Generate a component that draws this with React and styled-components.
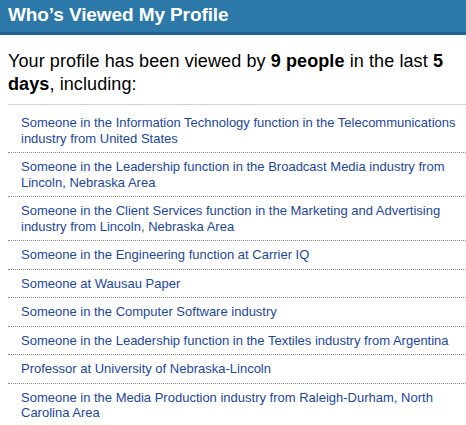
import React from "react";
import styled, { createGlobalStyle } from "styled-components";

const Global = createGlobalStyle`
  html, body { margin: 0; padding: 0; background: #fff; }
  body { font-family: "Liberation Sans", Arial, Helvetica, sans-serif; }
`;

const Page = styled.div`
  width: 466px;
  height: 425px;
  overflow: hidden;
  background: #fff;
`;

const Header = styled.div`
  height: 32px;
  background: #2b78a9;
  border-bottom: 3px solid #22628f;
  display: flex;
  align-items: center;
  padding: 0 8px;
`;

const Title = styled.h2`
  margin: 0;
  margin-top: -3px;
  color: #fff;
  font-size: 19px;
  font-weight: bold;
  letter-spacing: -0.1px;
`;

const Intro = styled.p`
  margin: 0;
  padding: 15px 4px 0 8px;
  font-size: 18px;
  line-height: 23px;
  letter-spacing: 0.1px;
  color: #000;
  b { font-weight: bold; }
`;

const List = styled.ul`
  list-style: none;
  margin: 8px 0 0 8px;
  padding: 4px 0 0 0;
  border-top: 1px solid #d2d2d2;
`;

const Item = styled.li`
  padding: 6px 6px 6px 13px;
  font-size: 13px;
  line-height: 15.5px;
  border-bottom: 1px dotted #8c8c8c;
  &:last-child { border-bottom: none; }
`;

const Link = styled.a`
  color: #1c47a0;
  text-decoration: none;
`;

const viewers = [
  "Someone in the Information Technology function in the Telecommunications industry from United States",
  "Someone in the Leadership function in the Broadcast Media industry from Lincoln, Nebraska Area",
  "Someone in the Client Services function in the Marketing and Advertising industry from Lincoln, Nebraska Area",
  "Someone in the Engineering function at Carrier IQ",
  "Someone at Wausau Paper",
  "Someone in the Computer Software industry",
  "Someone in the Leadership function in the Textiles industry from Argentina",
  "Professor at University of Nebraska-Lincoln",
  "Someone in the Media Production industry from Raleigh-Durham, North Carolina Area",
];

export default function App() {
  return (
    <Page>
      <Global />
      <Header>
        <Title>Who’s Viewed My Profile</Title>
      </Header>
      <Intro>
        Your profile has been viewed by <b>9 people</b> in the last <b>5 days</b>, including:
      </Intro>
      <List>
        {viewers.map((v) => (
          <Item key={v}>
            <Link href="#">{v}</Link>
          </Item>
        ))}
      </List>
    </Page>
  );
}
